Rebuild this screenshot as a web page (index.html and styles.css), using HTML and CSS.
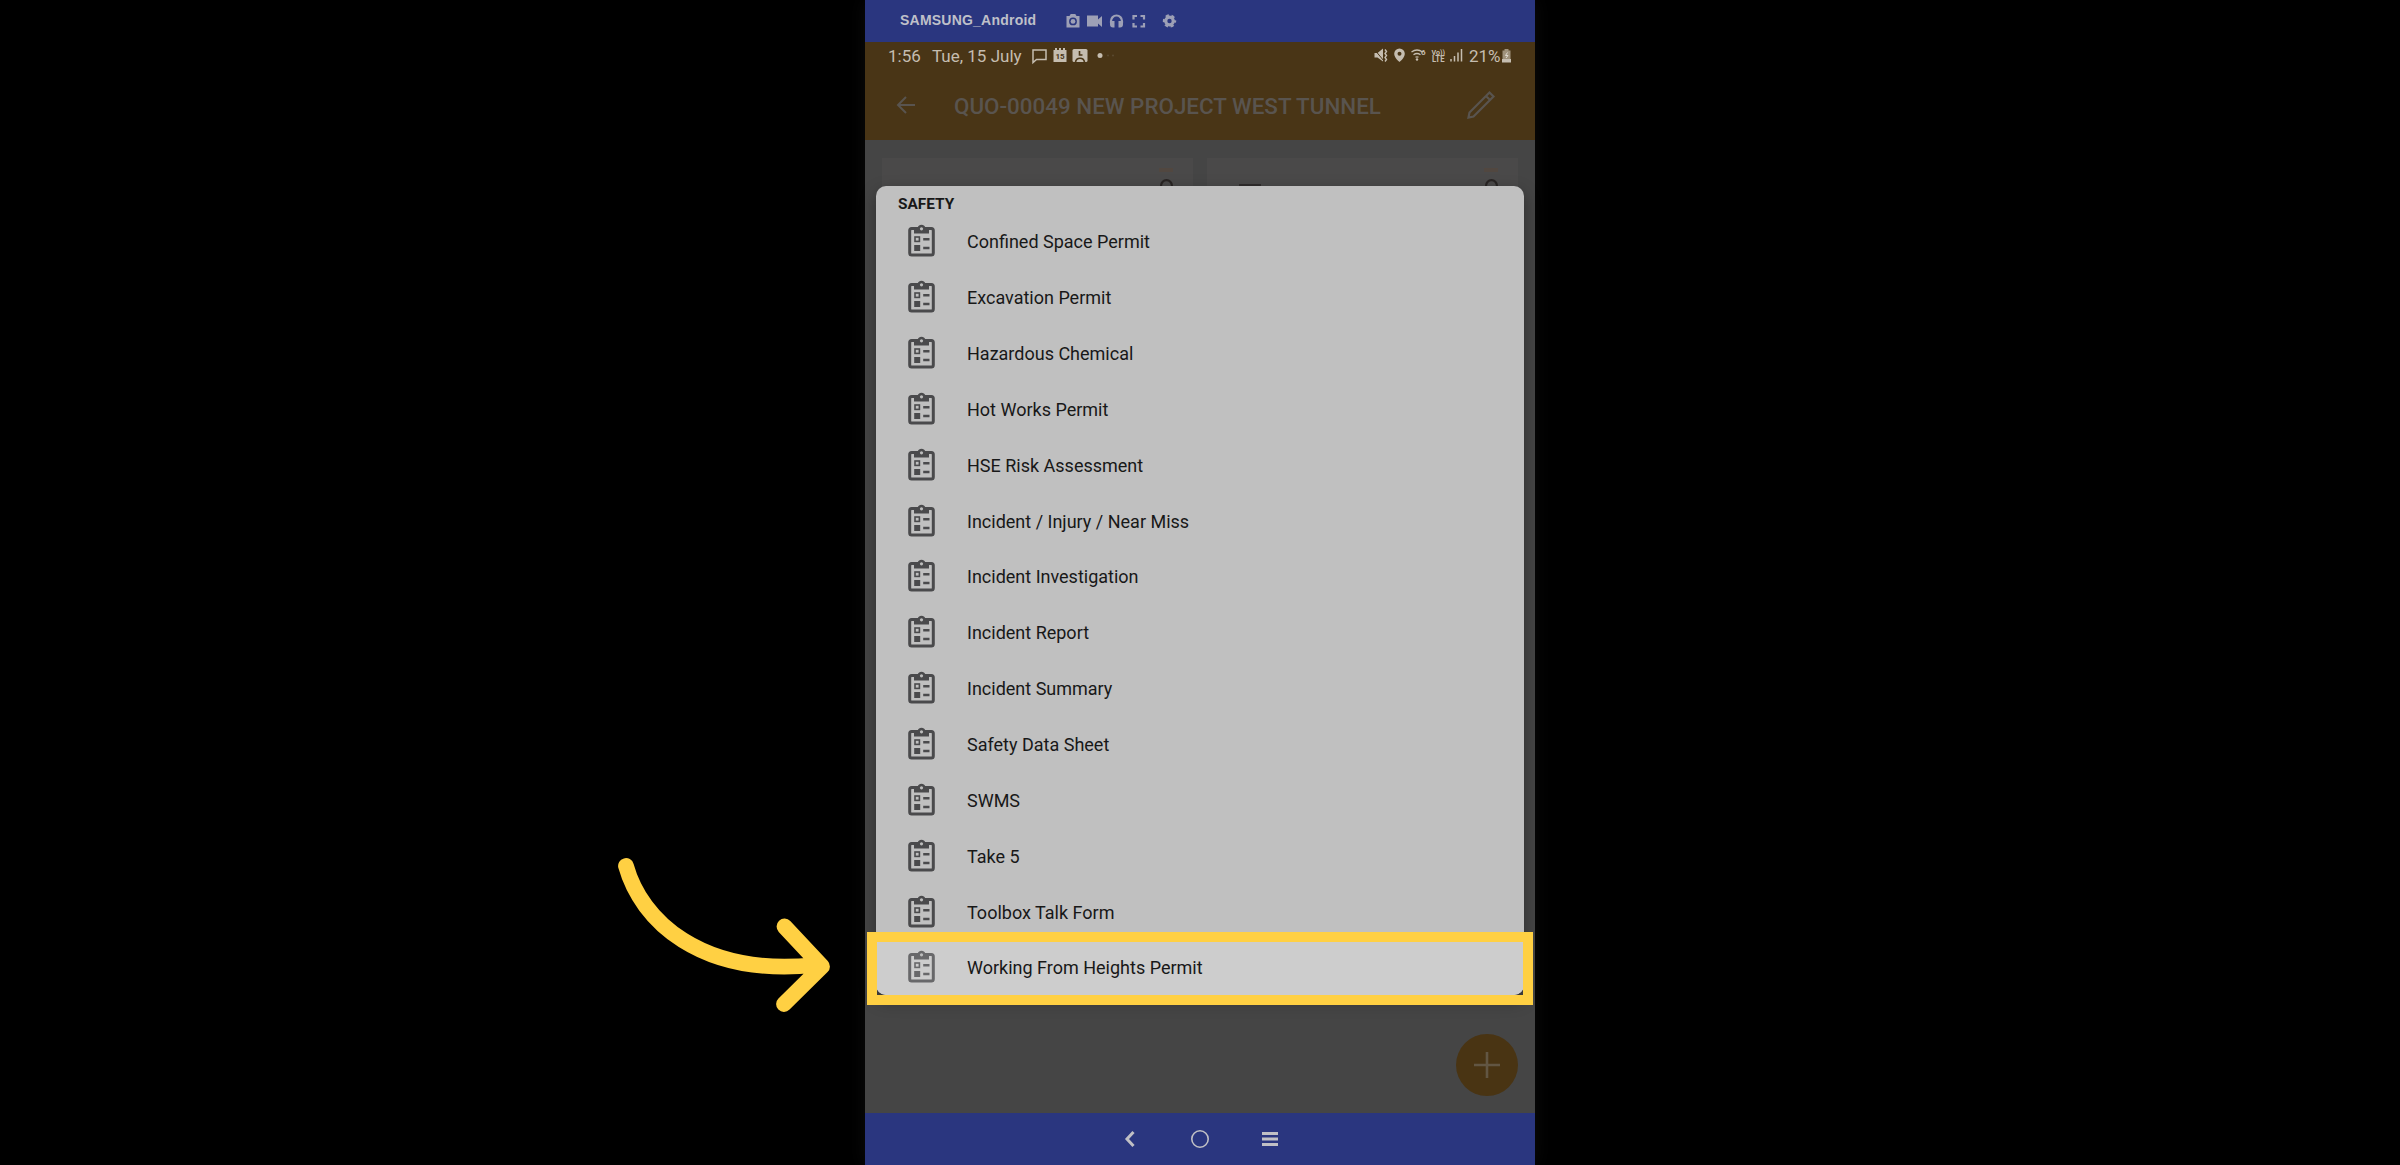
FILE: index.html
```html
<!DOCTYPE html>
<html lang="en">
<head>
<meta charset="utf-8">
<title>Safety forms</title>
<link rel="stylesheet" href="styles.css">
</head>
<body>
<svg class="defs" aria-hidden="true">
  <symbol id="clip" viewBox="0 0 27 33">
    <rect x="1.7" y="4.6" width="23.6" height="26.4" rx="2" fill="none" stroke="currentColor" stroke-width="3"/>
    <path d="M6 3.500h3.700a4 4 0 0 1 7.600 0H21v6H6z" fill="currentColor"/>
    <circle cx="13.500" cy="4.800" r="1.600" fill="#bdbdbd"/>
    <rect x="7" y="13" width="4.400" height="4.400" fill="none" stroke="currentColor" stroke-width="1.600"/>
    <rect x="6.200" y="21" width="6" height="6" fill="currentColor"/>
    <path d="M15.200 15.300h6.300M15.200 24h6.300" stroke="currentColor" stroke-width="2.500"/>
  </symbol>
</svg>
<main class="phone">
  <header class="titlebar">
    <span class="device">SAMSUNG_Android</span>
    <svg class="tools" viewBox="0 0 112 16" fill="currentColor">
      <path fill-rule="evenodd" d="M1.500 3h3l1.200-2h4.600l1.200 2h3v11.500h-13zM8 4.500a3.900 3.900 0 1 0 0 7.800 3.900 3.900 0 0 0 0-7.800z"/><circle cx="8" cy="8.400" r="2.400"/>
      <path d="M22 2.500h11v4l4-3.500v11l-4-3.500v3H22z"/>
      <path d="M46 10V8a5.500 5.500 0 0 1 11 0v2" fill="none" stroke="currentColor" stroke-width="2.200"/><path d="M45 8h4.500v6.500H48a3 3 0 0 1-3-3zM53.500 8H58v3.500a3 3 0 0 1-3 3h-1.500z"/>
      <path d="M68.500 6.500V3H72M75.500 3H79v3.500M79 10v3.500h-3.500M72 13.500h-3.500V10" fill="none" stroke="currentColor" stroke-width="2.200"/>
      <circle cx="104.500" cy="8" r="3.800" fill="none" stroke="currentColor" stroke-width="3.200"/><circle cx="104.500" cy="8" r="5.600" fill="none" stroke="currentColor" stroke-width="2.200" stroke-dasharray="3.200 2.664" stroke-dashoffset="1.600"/>
    </svg>
  </header>
  <section class="appbar">
    <div class="status">
      <span class="clock">1:56</span><span class="date">Tue, 15 July</span>
      <svg class="notes" viewBox="0 0 86 18">
        <path d="M2 3h13v9.500H5.500L2 15.500z" fill="none" stroke="currentColor" stroke-width="1.500"/>
        <path d="M22.500 3h1.500V1h2v2h2V1h2v2h2V1h2v2h1.500v12h-13z" fill="currentColor"/><text x="24.500" y="12" class="mini">15</text>
        <rect x="41.500" y="2" width="15" height="13" rx="1.500" fill="currentColor"/><path d="M48.500 4v4h3M44.500 15c1-5 8-5 9 0" fill="none" stroke="#493516" stroke-width="1.600"/>
        <circle cx="69" cy="8.500" r="2.500" fill="currentColor"/><circle cx="77" cy="8.500" r="1" fill="#5c4b31"/><circle cx="82" cy="8.500" r="1" fill="#5c4b31"/>
      </svg>
      <svg class="signals" viewBox="0 0 90 18">
        <path d="M1.500 6h3L10 1.500v13L4.500 10.500h-3z" fill="currentColor"/><path d="M1 2l10 12" stroke="#493516"/><path d="M12 2.500l1.500 2-1.500 2 1.500 2-1.500 2 1.500 2-1.500 2" fill="none" stroke="currentColor" stroke-width="1.400"/>
        <path fill-rule="evenodd" d="M26.500 1.500a5.300 5.300 0 0 0-5.300 5.300c0 4.200 5.300 8.200 5.300 8.200s5.300-4 5.300-8.200a5.300 5.300 0 0 0-5.300-5.300zm0 3.200a2 2 0 1 1 0 4 2 2 0 0 1 0-4z" fill="currentColor"/>
        <path d="M38.500 5q5.500-4 11 0M40.500 7.800q3.500-2.600 7 0M42.500 10.300q1.500-1 3 0" fill="none" stroke="currentColor" stroke-width="1.300"/><circle cx="44" cy="12.500" r="1.200" fill="currentColor"/><text x="48" y="8" class="tag">6</text>
        <text x="58.500" y="7.500" class="tag" textLength="13.500" lengthAdjust="spacingAndGlyphs">Vo))</text><text x="59" y="15.300" class="tag lte" textLength="12.500" lengthAdjust="spacingAndGlyphs">LTE</text>
        <path d="M78 12V14.500M81.500 9V14.500M85 5.500V14.500M88.500 2V14.500" stroke="currentColor" stroke-width="1.500"/>
      </svg>
      <span class="battery">21%</span>
      <svg class="cell" viewBox="0 0 9 14"><path d="M2.500 0h4v1.500h2V10h-8V1.500h2z" fill="#a0927b"/><path d="M0 10h9v3.500H0z" fill="currentColor"/><path d="M5.500 3.500L3.500 6.500h2.500L4 9" stroke="#e0dacf" fill="none"/></svg>
    </div>
    <div class="project">
      <svg class="back" viewBox="0 0 20 18"><path d="M19 9H2M10 1L2 9l8 8" fill="none" stroke="currentColor" stroke-width="2"/></svg>
      <h1>QUO-00049 NEW PROJECT WEST TUNNEL</h1>
      <svg class="pencil" viewBox="0 0 30 30"><path d="M2.500 27.500l1-5L20 6l4 4L7.500 26.500zM20 6l3.500-3.500 4 4L24 10" fill="none" stroke="currentColor" stroke-width="2.200"/></svg>
    </div>
  </section>
  <section class="content">
    <div class="cards">
      <div class="card"><i class="tick"></i><svg class="ring" viewBox="0 0 12 12"><circle cx="6" cy="6" r="5" fill="none" stroke="#282423" stroke-width="2"/></svg></div>
      <div class="card"><i class="dash"></i><i class="tick"></i><svg class="ring" viewBox="0 0 12 12"><circle cx="6" cy="6" r="5" fill="none" stroke="#282423" stroke-width="2"/></svg></div>
    </div>
    <div class="dialog">
      <h2>SAFETY</h2>
      <ul>
        <li><svg><use href="#clip"/></svg><span>Confined Space Permit</span></li>
        <li><svg><use href="#clip"/></svg><span>Excavation Permit</span></li>
        <li><svg><use href="#clip"/></svg><span>Hazardous Chemical</span></li>
        <li><svg><use href="#clip"/></svg><span>Hot Works Permit</span></li>
        <li><svg><use href="#clip"/></svg><span>HSE Risk Assessment</span></li>
        <li><svg><use href="#clip"/></svg><span>Incident / Injury / Near Miss</span></li>
        <li><svg><use href="#clip"/></svg><span>Incident Investigation</span></li>
        <li><svg><use href="#clip"/></svg><span>Incident Report</span></li>
        <li><svg><use href="#clip"/></svg><span>Incident Summary</span></li>
        <li><svg><use href="#clip"/></svg><span>Safety Data Sheet</span></li>
        <li><svg><use href="#clip"/></svg><span>SWMS</span></li>
        <li><svg><use href="#clip"/></svg><span>Take 5</span></li>
        <li><svg><use href="#clip"/></svg><span>Toolbox Talk Form</span></li>
        <li class="active"><svg><use href="#clip"/></svg><span>Working From Heights Permit</span></li>
      </ul>
    </div>
    <svg class="add" viewBox="0 0 64 64"><circle cx="32" cy="32" r="31" fill="#493413"/><path d="M32 19v26M19 32h26" stroke="#625643" stroke-width="2.600"/></svg>
  </section>
  <nav class="navbar">
    <svg viewBox="0 0 20 20"><path d="M13.500 3L7 10l6.500 7" fill="none" stroke="currentColor" stroke-width="3"/></svg>
    <svg viewBox="0 0 20 20"><circle cx="10" cy="10" r="8.200" fill="none" stroke="currentColor" stroke-width="1.600"/></svg>
    <svg viewBox="0 0 20 20"><path d="M2 4.500h16M2 10h16M2 15.500h16" stroke="currentColor" stroke-width="3"/></svg>
  </nav>
</main>
<div class="highlight"></div>
<svg class="arrow" viewBox="610 850 230 170"><path d="M626 866C641 920 700 977 815 965M784.500 926.500L822 966.500L784 1004" fill="none" stroke="#ffd043" stroke-width="15.800" stroke-linecap="round" stroke-linejoin="round"/></svg>
</body>
</html>
```
FILE: styles.css
```css
* { box-sizing: border-box; }
body { margin: 0; background: #000; height: 1165px; overflow: hidden; font-family: Roboto, sans-serif; display: flex; justify-content: center; position: relative; }
svg { display: block; flex: none; }
.defs { position: absolute; width: 0; height: 0; }
.phone { width: 670px; height: 1165px; display: flex; flex-direction: column; box-shadow: 0 0 18px #0c0c0c; }
.titlebar { height: 42px; background: #2a367f; display: flex; padding: 11px 0 0 35px; color: #9da0b6; }
.device { font: bold 14px/18px "Liberation Sans", sans-serif; color: #bfc0c9; width: 165px; letter-spacing: .22px; }
.tools { width: 112px; height: 16px; margin-top: 2px; }
.appbar { height: 98px; background: #493516; }
.status { height: 28px; display: flex; align-items: center; padding-left: 23px; color: #c5bdb0; font-size: 17px; }
.clock { width: 44px; }
.date { width: 99px; }
.notes { width: 86px; height: 18px; }
.signals { width: 90px; height: 18px; margin-left: 256px; }
.battery { margin-left: 6px; width: 32px; }
.cell { width: 9px; height: 14px; margin-left: 1px; }
.mini { font: bold 8px Roboto, sans-serif; fill: #493516; }
.tag { font: bold 8px Roboto, sans-serif; fill: #c5bdb0; }
.lte { font-size: 9px; }
.project { height: 71px; display: flex; align-items: center; padding-left: 31px; color: #59544f; }
.back { width: 20px; height: 18px; margin-top: -1px; }
h1 { font-size: 22.400px; font-weight: 500; line-height: 28px; margin: 0 0 0 38px; width: 512px; white-space: nowrap; }
.pencil { width: 30px; height: 30px; margin-top: -2px; }
.content { height: 973px; background: #454545; padding: 18px 17px 0; position: relative; }
.cards { display: flex; gap: 14px; height: 60px; }
.card { flex: 1; background: #4a4949; position: relative; }
.ring { position: absolute; width: 13px; height: 13px; right: 20px; top: 21px; }
.tick { position: absolute; width: 14px; height: 4px; right: 20px; top: 10px; background: #514740; }
.dash { position: absolute; width: 22px; height: 5px; left: 32px; top: 26px; background: #302d2d; }
.dialog { position: absolute; left: 11px; top: 46px; width: 647.500px; height: 808.500px; border-radius: 10px; background: #c0c0c0; box-shadow: 0 6px 16px rgba(0,0,0,.35); overflow: hidden; color: #181818; }
h2 { font-size: 15.400px; line-height: 18px; font-weight: 700; margin: 9px 0 0 22px; height: 18.500px; }
ul { list-style: none; margin: 0; padding: 0; }
li { height: 55.850px; display: flex; align-items: center; padding-left: 32px; font-size: 18px; }
li svg { width: 27px; height: 33px; color: #4a4a4c; margin: -1px 32px 0 0; }
li span { padding-top: 1px; }
.active { background: #cdcdcd; }
.active svg { color: #68686a; }
.add { position: absolute; width: 64px; height: 64px; right: 16px; top: 893px; }
.navbar { height: 52px; background: #2a367f; display: flex; align-items: center; justify-content: center; gap: 50px; color: #c0c0c5; }
.navbar svg { width: 20px; height: 20px; }
.highlight { position: absolute; left: 867px; top: 932px; width: 666px; height: 73px; border: 10px solid #ffd043; }
.arrow { position: absolute; left: 610px; top: 850px; width: 230px; height: 170px; }
```
